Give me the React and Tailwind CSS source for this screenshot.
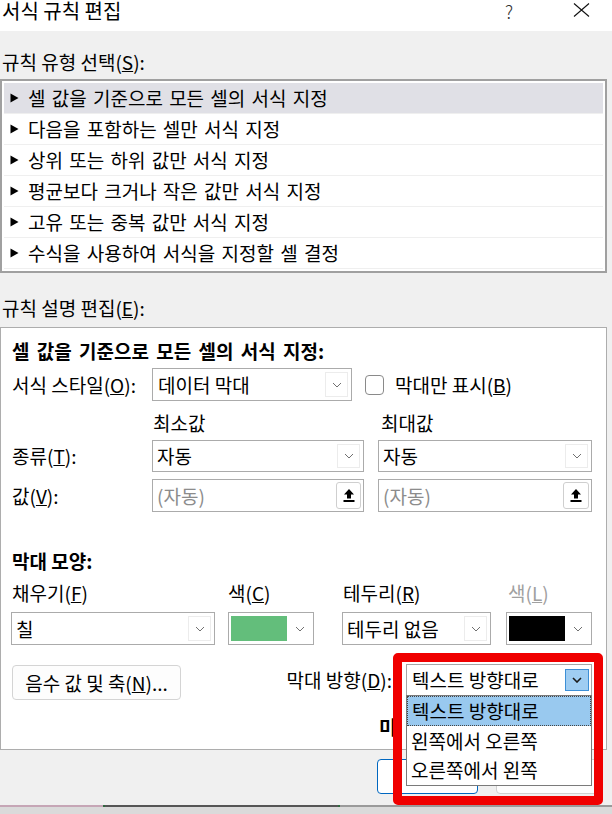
import React from "react";

const Chevron = ({ dark }) => (
  <svg width="10" height="6" viewBox="0 0 10 6" fill="none">
    <path
      d="M1 1 L5 5 L9 1"
      stroke={dark ? "#1a1a1a" : "#707070"}
      strokeWidth={dark ? 1.6 : 1}
    />
  </svg>
);

const DropBtn = () => (
  <div className="my-[3px] mr-[3px] w-[23px] shrink-0 self-stretch flex items-center justify-center border border-[#ececec] bg-white">
    <Chevron />
  </div>
);

const UploadIcon = () => (
  <svg width="12" height="15" viewBox="0 0 12 15">
    <path d="M6 1 L11 6.5 L8 6.5 L8 10.5 L4 10.5 L4 6.5 L1 6.5 Z" fill="#000" />
    <rect x="0.5" y="12" width="11" height="2" fill="#000" />
  </svg>
);

const Tri = () => (
  <svg width="9" height="10" viewBox="0 0 9 10" className="shrink-0">
    <path d="M0.5 0.5 L8.5 5 L0.5 9.5 Z" fill="#000" />
  </svg>
);

const rules = [
  "셀 값을 기준으로 모든 셀의 서식 지정",
  "다음을 포함하는 셀만 서식 지정",
  "상위 또는 하위 값만 서식 지정",
  "평균보다 크거나 작은 값만 서식 지정",
  "고유 또는 중복 값만 서식 지정",
  "수식을 사용하여 서식을 지정할 셀 결정",
];

export default function App() {
  return (
    <div className="relative w-[612px] h-[814px] overflow-hidden bg-[#f0f0f0] flex flex-col font-['Noto_Sans_CJK_KR',sans-serif] text-black text-[19px] whitespace-nowrap">
      {/* Title bar */}
      <div className="h-[31px] bg-white flex items-start shrink-0">
        <div className="pl-[2px] text-[20px] leading-[22px]">서식 규칙 편집</div>
        <div className="ml-auto flex items-start">
          <span className="text-[18px] leading-[22px] font-light text-[#333]">?</span>
          <svg width="17" height="14" viewBox="0 0 17 14" className="ml-[60px] mr-[22px] mt-[3px]">
            <path d="M1 0.5 L16 13.5 M16 0.5 L1 13.5" stroke="#111" strokeWidth="1.1" />
          </svg>
        </div>
      </div>

      {/* Rule type */}
      <div className="mt-[20px] pl-[2px] leading-[22px]">
        규칙 유형 선택(<span className="underline">S</span>):
      </div>
      <div className="mt-[6px] w-[607px] h-[194px] border-2 border-[#a0a0a0] bg-white py-[2px] px-[2px]">
        {rules.map((r, i) => (
          <div
            key={r}
            className={`h-[31px] flex items-center gap-[9px] pl-[6px] text-[19px] border-b border-[#efefef] ${
              i === 0 ? "bg-[#e0e0e6]" : "bg-white"
            }`}
          >
            <Tri />
            <span className="leading-[22px] [word-spacing:2px]">{r}</span>
          </div>
        ))}
      </div>

      {/* Rule description */}
      <div className="mt-[24px] pl-[2px] leading-[22px]">
        규칙 설명 편집(<span className="underline">E</span>):
      </div>
      <div className="mt-[8px] w-[607px] h-[423px] shrink-0 border border-[#adadad] bg-white flex flex-col">
        <div className="mt-[12px] pl-[11px] leading-[22px] font-bold [word-spacing:3px]">
          셀 값을 기준으로 모든 셀의 서식 지정:
        </div>

        <div className="mt-[6px] pl-[11px] flex items-center h-[33px]">
          <div className="w-[140px] leading-[22px]">
            서식 스타일(<span className="underline">O</span>):
          </div>
          <div className="w-[200px] h-[33px] flex items-stretch border border-[#ababab] bg-white">
            <div className="flex-1 flex items-center pl-[5px] leading-[22px]">데이터 막대</div>
            <DropBtn />
          </div>
          <div className="ml-[13px] w-[19px] h-[20px] rounded-[4px] border border-[#8a8a8a] bg-white" />
          <div className="ml-[11px] leading-[22px]">
            막대만 표시(<span className="underline">B</span>)
          </div>
        </div>

        <div className="mt-[11px] pl-[11px] flex h-[22px] leading-[22px]">
          <div className="w-[140px]" />
          <div className="w-[212px] pl-[1px]">최소값</div>
          <div className="ml-[14px] pl-[3px]">최대값</div>
        </div>

        <div className="mt-[6px] pl-[11px] flex items-center h-[32px]">
          <div className="w-[140px] leading-[22px]">
            종류(<span className="underline">T</span>):
          </div>
          <div className="w-[212px] h-[32px] flex items-stretch border border-[#ababab] bg-white">
            <div className="flex-1 flex items-center pl-[4px] leading-[22px]">자동</div>
            <DropBtn />
          </div>
          <div className="ml-[14px] w-[214px] h-[32px] flex items-stretch border border-[#ababab] bg-white">
            <div className="flex-1 flex items-center pl-[4px] leading-[22px]">자동</div>
            <DropBtn />
          </div>
        </div>

        <div className="mt-[7px] pl-[11px] flex items-center h-[33px]">
          <div className="w-[140px] leading-[22px]">
            값(<span className="underline">V</span>):
          </div>
          <div className="w-[212px] h-[33px] flex items-stretch border border-[#ababab] bg-white">
            <div className="flex-1 flex items-center pl-[4px] leading-[22px] text-[#8c8c8c]">(자동)</div>
            <div className="my-[2px] mr-[2px] w-[25px] flex items-center justify-center rounded-[3px] border border-[#cfcfcf] bg-white">
              <UploadIcon />
            </div>
          </div>
          <div className="ml-[14px] w-[214px] h-[33px] flex items-stretch border border-[#ababab] bg-white">
            <div className="flex-1 flex items-center pl-[4px] leading-[22px] text-[#8c8c8c]">(자동)</div>
            <div className="my-[2px] mr-[2px] w-[26px] flex items-center justify-center rounded-[3px] border border-[#cfcfcf] bg-white">
              <UploadIcon />
            </div>
          </div>
        </div>

        <div className="mt-[38px] pl-[11px] leading-[22px] font-bold">막대 모양:</div>

        <div className="mt-[10px] pl-[10px] flex h-[22px] leading-[22px]">
          <div className="w-[204px] pl-[1px]">
            채우기(<span className="underline">F</span>)
          </div>
          <div className="ml-[13px] w-[86px]">
            색(<span className="underline">C</span>)
          </div>
          <div className="ml-[28px] w-[149px] pl-[1px]">
            테두리(<span className="underline">R</span>)
          </div>
          <div className="ml-[15px] w-[86px] pl-[2px] text-[#a0a0a0]">
            색(<span className="underline">L</span>)
          </div>
        </div>

        <div className="mt-[8px] pl-[10px] flex h-[33px]">
          <div className="w-[204px] flex items-stretch border border-[#ababab] bg-white">
            <div className="flex-1 flex items-center pl-[4px] leading-[22px]">칠</div>
            <DropBtn />
          </div>
          <div className="ml-[13px] w-[86px] flex items-stretch border border-[#ababab] bg-white">
            <div className="my-[3px] ml-[2px] w-[56px] bg-[#63be7b]" />
            <div className="flex-1 flex items-center justify-center">
              <Chevron />
            </div>
          </div>
          <div className="ml-[28px] w-[149px] flex items-stretch border border-[#ababab] bg-white">
            <div className="flex-1 flex items-center pl-[4px] leading-[22px]">테두리 없음</div>
            <DropBtn />
          </div>
          <div className="ml-[15px] w-[86px] flex items-stretch border border-[#ababab] bg-white">
            <div className="my-[3px] ml-[2px] w-[56px] bg-black" />
            <div className="flex-1 flex items-center justify-center">
              <Chevron />
            </div>
          </div>
        </div>

        <div className="mt-[19px] pl-[11px] flex items-start h-[36px]">
          <div className="mt-[1px] w-[169px] h-[35px] flex items-center justify-center rounded-[4px] border border-[#d4d4d4] bg-[#fdfdfd] leading-[22px]">
            음수 값 및 축(<span className="underline">N</span>)...
          </div>
          <div className="w-[225px] h-[32px] flex items-center justify-end pr-[14px] leading-[22px]">
            막대 방향(<span className="underline">D</span>):
          </div>
          <div className="w-[186px] h-[32px] flex items-stretch border border-[#a6a6a6] bg-white">
            <div className="flex-1 flex items-center pl-[5px] leading-[22px]">텍스트 방향대로</div>
            <div className="my-[4px] mr-[2px] w-[24px] shrink-0 flex items-center justify-center border border-[#3d8fd6] bg-[#9fcdf2]">
              <Chevron dark />
            </div>
          </div>
        </div>

        {/* Preview label, mostly hidden behind the open list */}
        <div className="mt-[16px] pl-[378px] h-[22px]">
          <div className="w-[15px] overflow-hidden leading-[22px] font-bold">미리 보기:</div>
        </div>
      </div>

      {/* Footer buttons (covered by the open list) */}
      <div className="mt-[9px] pl-[377px] flex h-[35px]">
        <div className="w-[101px] h-[35px] rounded-[4px] border border-[#0067c0] bg-white" />
        <div className="ml-[18px] w-[102px] h-[35px] rounded-[4px] border border-[#d0d0d0] bg-[#fdfdfd]" />
      </div>

      {/* Worksheet strip below the dialog */}
      <div className="mt-auto h-[9px] flex flex-col bg-[#dadada]">
        <div className="flex h-[2px]">
          <div className="w-[103px] bg-[#c6a6b6]" />
          <div className="w-[2px] bg-[#2f6b3f]" />
          <div className="w-[233px] bg-[#555]" />
          <div className="w-[2px] bg-[#2f6b3f]" />
          <div className="flex-1 bg-[#9a9a9a]" />
        </div>
      </div>

      {/* Open dropdown list */}
      <div className="absolute left-[406px] top-[695px] w-[186px] h-[91px] border border-[#7a7a7a] bg-white">
        <div className="h-[30px] flex items-center pl-[4px] bg-[#99c9ef] border border-dotted border-[#444] leading-[20px]">
          텍스트 방향대로
        </div>
        <div className="h-[29px] flex items-center pl-[4px] leading-[20px]">왼쪽에서 오른쪽</div>
        <div className="h-[29px] flex items-center pl-[4px] leading-[20px]">오른쪽에서 왼쪽</div>
      </div>

      {/* Red annotation frame */}
      <div className="absolute left-[393px] top-[653px] w-[210px] h-[152px] border-[9px] border-[#f00000] rounded-[5px]" />
    </div>
  );
}
